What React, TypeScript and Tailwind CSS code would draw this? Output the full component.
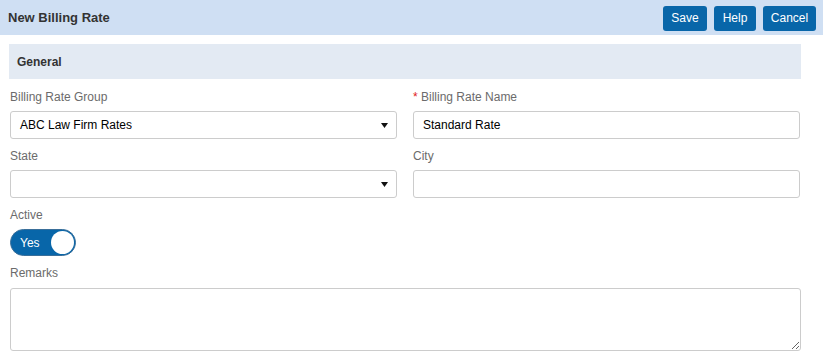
import React from "react";

function Caret() {
  return (
    <svg width="7" height="5" viewBox="0 0 7 5" className="mr-[-1px]">
      <path d="M0 0 L7 0 L3.5 5 Z" fill="#111" />
    </svg>
  );
}

export default function App() {
  const label = "text-[12px] leading-[14px] text-[#6b6b6b]";
  const box = "h-[28px] w-full rounded-[3px] border border-[#cccccc] bg-white flex items-center px-[9px] text-[12px] text-black";
  return (
    <div className="w-[823px] h-[355px] bg-white overflow-hidden" style={{ fontFamily: '"Liberation Sans", Arial, sans-serif' }}>
      <div className="h-[35px] bg-[#cfdff3] flex items-center justify-between pl-[8px] pr-[7px]">
        <div className="text-[13px] font-bold text-[#333333]">New Billing Rate</div>
        <div className="flex gap-[7px] pt-[1px]">
          <button className="h-[25px] w-[44px] rounded-[3px] bg-[#0866a9] text-white text-[12px]">Save</button>
          <button className="h-[25px] w-[42px] rounded-[3px] bg-[#0866a9] text-white text-[12px]">Help</button>
          <button className="h-[25px] w-[53px] rounded-[3px] bg-[#0866a9] text-white text-[12px]">Cancel</button>
        </div>
      </div>
      <div className="pl-[9px] pr-[22px] pt-[9px]">
        <div className="h-[35px] bg-[#e3eaf3] flex items-center pl-[8px] text-[12px] font-bold text-[#333333]">General</div>
        <div className="grid grid-cols-2 gap-x-[16px] pl-[1px] pr-[1px] mt-[11px]">
          <div>
            <div className={label}>Billing Rate Group</div>
            <div className={`${box} mt-[7px] justify-between`}>
              <span>ABC Law Firm Rates</span>
              <Caret />
            </div>
          </div>
          <div>
            <div className={label}><span className="text-[#e02020]">*</span> Billing Rate Name</div>
            <div className={`${box} mt-[7px]`}>Standard Rate</div>
          </div>
          <div className="mt-[10px]">
            <div className={label}>State</div>
            <div className={`${box} mt-[7px] justify-end`}>
              <Caret />
            </div>
          </div>
          <div className="mt-[10px]">
            <div className={label}>City</div>
            <div className={`${box} mt-[7px]`}></div>
          </div>
        </div>
        <div className="pl-[1px] mt-[10px]">
          <div className={label}>Active</div>
          <div className="mt-[7px] w-[66px] h-[27px] rounded-full bg-[#0866a9] border border-[#3a6f9a] flex items-center justify-between pl-[9px] pr-[1px]">
            <span className="text-white text-[12px]">Yes</span>
            <span className="w-[23px] h-[23px] rounded-full bg-white"></span>
          </div>
          <div className={`${label} mt-[10px]`}>Remarks</div>
          <textarea className="mt-[8px] block w-full h-[63px] rounded-[3px] border border-[#cccccc] bg-white resize-y outline-none" />
        </div>
      </div>
    </div>
  );
}
